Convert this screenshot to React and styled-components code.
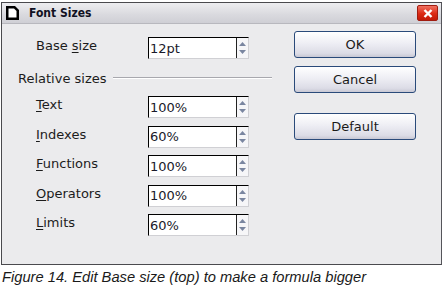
import React from 'react';
import styled, { createGlobalStyle } from 'styled-components';

const GlobalStyle = createGlobalStyle`
  body {
    margin: 0;
    background: #ffffff;
  }
`;

const Page = styled.div`
  width: 444px;
  height: 291px;
  padding: 2px 0 0 1px;
  box-sizing: border-box;
  font-family: 'DejaVu Sans', 'Liberation Sans', sans-serif;
`;

const Window = styled.div`
  width: 441px;
  height: 263px;
  box-sizing: border-box;
  border: 1px solid #4a4a4e;
  border-right-color: #55555a;
  background: #ebebed;
  display: flex;
  flex-direction: column;
`;

const TitleBar = styled.div`
  height: 20px;
  display: flex;
  align-items: center;
  padding: 0 3px 0 4px;
  background: linear-gradient(#ededf0, #d9d9de 60%, #cfcfd5);
  border-bottom: 1px solid #b8b8be;
`;

const Title = styled.span`
  margin-left: 10px;
  font-family: 'DejaVu Sans Condensed', 'DejaVu Sans', sans-serif;
  font-weight: bold;
  font-size: 12px;
  color: #111122;
  flex: 1;
`;

const CloseButton = styled.div`
  width: 21px;
  height: 16px;
  border-radius: 2px;
  background: linear-gradient(#f07060, #dc2a14 55%, #c21a08);
  border: 1px solid #a01c10;
  box-sizing: border-box;
  display: flex;
  align-items: center;
  justify-content: center;
`;

const Body = styled.div`
  flex: 1;
  display: flex;
  padding: 7px 0 0 0;
`;

const LeftPanel = styled.div`
  width: 270px;
  display: flex;
  flex-direction: column;
`;

const Row = styled.div`
  height: 22px;
  display: flex;
  align-items: center;
  padding-left: 34px;
  margin-top: ${(p) => p.$top || 0}px;
`;

const Label = styled.span`
  width: 112px;
  font-size: 13px;
  color: #1c1c1c;
  padding-bottom: 5px;
  u {
    text-decoration: underline;
    text-underline-offset: 2px;
  }
`;

const SectionHeader = styled.div`
  display: flex;
  align-items: center;
  margin: 12px 0 0 16px;
  height: 14px;
  font-size: 13px;
  color: #1c1c1c;
  &::after {
    content: '';
    flex: 1;
    height: 1px;
    margin-left: 6px;
    background: #a8a8ae;
    border-bottom: 1px solid #ffffff;
  }
`;

const SpinBox = styled.div`
  width: 101px;
  height: 22px;
  box-sizing: border-box;
  display: flex;
  border: 1px solid;
  border-color: #000000 #d0d0d4 #d0d0d4 #000000;
  background: #ffffff;
`;

const SpinValue = styled.div`
  flex: 1;
  font-size: 13px;
  color: #1a1a2a;
  padding-left: 1px;
  display: flex;
  align-items: center;
`;

const SpinArrows = styled.div`
  width: 11px;
  border-left: 1px solid #222;
  background: #f6f6f8;
  display: flex;
  flex-direction: column;
  align-items: center;
  justify-content: center;
  gap: 4px;
`;

const RightPanel = styled.div`
  display: flex;
  flex-direction: column;
  padding: 0 0 0 22px;
`;

const Button = styled.div`
  width: 122px;
  height: 27px;
  box-sizing: border-box;
  margin-top: ${(p) => p.$top || 0}px;
  border: 1px solid #2a4a7a;
  border-radius: 3px;
  background: linear-gradient(#ffffff, #eeeef4 45%, #dcdce6 85%, #c8c8d4);
  display: flex;
  align-items: center;
  justify-content: center;
  font-size: 13px;
  color: #1a1a1a;
`;

const Caption = styled.div`
  margin-top: 4px;
  padding-left: 1px;
  font-family: 'Liberation Sans', Arial, sans-serif;
  font-style: italic;
  font-size: 14.7px;
  color: #1a1a1a;
`;

const Arrow = ({ up }) => (
  <svg width="7" height="4" viewBox="0 0 7 4">
    <path d={up ? 'M0 4 L3.5 0 L7 4 Z' : 'M0 0 L3.5 4 L7 0 Z'} fill="#7a86a0" />
  </svg>
);

const Spin = ({ value }) => (
  <SpinBox>
    <SpinValue>{value}</SpinValue>
    <SpinArrows>
      <Arrow up />
      <Arrow />
    </SpinArrows>
  </SpinBox>
);

const rows = [
  { key: 'T', rest: 'ext', value: '100%' },
  { key: 'I', rest: 'ndexes', value: '60%' },
  { key: 'F', rest: 'unctions', value: '100%' },
  { key: 'O', rest: 'perators', value: '100%' },
  { key: 'L', rest: 'imits', value: '60%' },
];

const App = () => (
  <Page>
    <GlobalStyle />
    <Window>
      <TitleBar>
        <svg width="13" height="14" viewBox="0 0 13 14">
          <path d="M0 0 H9 L13 4 V14 H0 Z" fill="#000" />
          <path d="M2.5 2.5 H8 L10.5 5 V11.5 H2.5 Z" fill="#fff" />
        </svg>
        <Title>Font Sizes</Title>
        <CloseButton>
          <svg width="10" height="9" viewBox="0 0 10 9">
            <path d="M1.5 1 L8.5 8 M8.5 1 L1.5 8" stroke="#fff" strokeWidth="2.4" />
          </svg>
        </CloseButton>
      </TitleBar>
      <Body>
        <LeftPanel>
          <Row $top={6}>
            <Label>
              Base <u>s</u>ize
            </Label>
            <Spin value="12pt" />
          </Row>
          <SectionHeader>Relative sizes</SectionHeader>
          {rows.map((r, i) => (
            <Row key={r.rest} $top={i === 0 ? 11 : 7.5}>
              <Label>
                <u>{r.key}</u>
                {r.rest}
              </Label>
              <Spin value={r.value} />
            </Row>
          ))}
        </LeftPanel>
        <RightPanel>
          <Button>OK</Button>
          <Button $top={8}>Cancel</Button>
          <Button $top={20}>Default</Button>
        </RightPanel>
      </Body>
    </Window>
    <Caption>Figure 14. Edit Base size (top) to make a formula bigger</Caption>
  </Page>
);

export default App;
